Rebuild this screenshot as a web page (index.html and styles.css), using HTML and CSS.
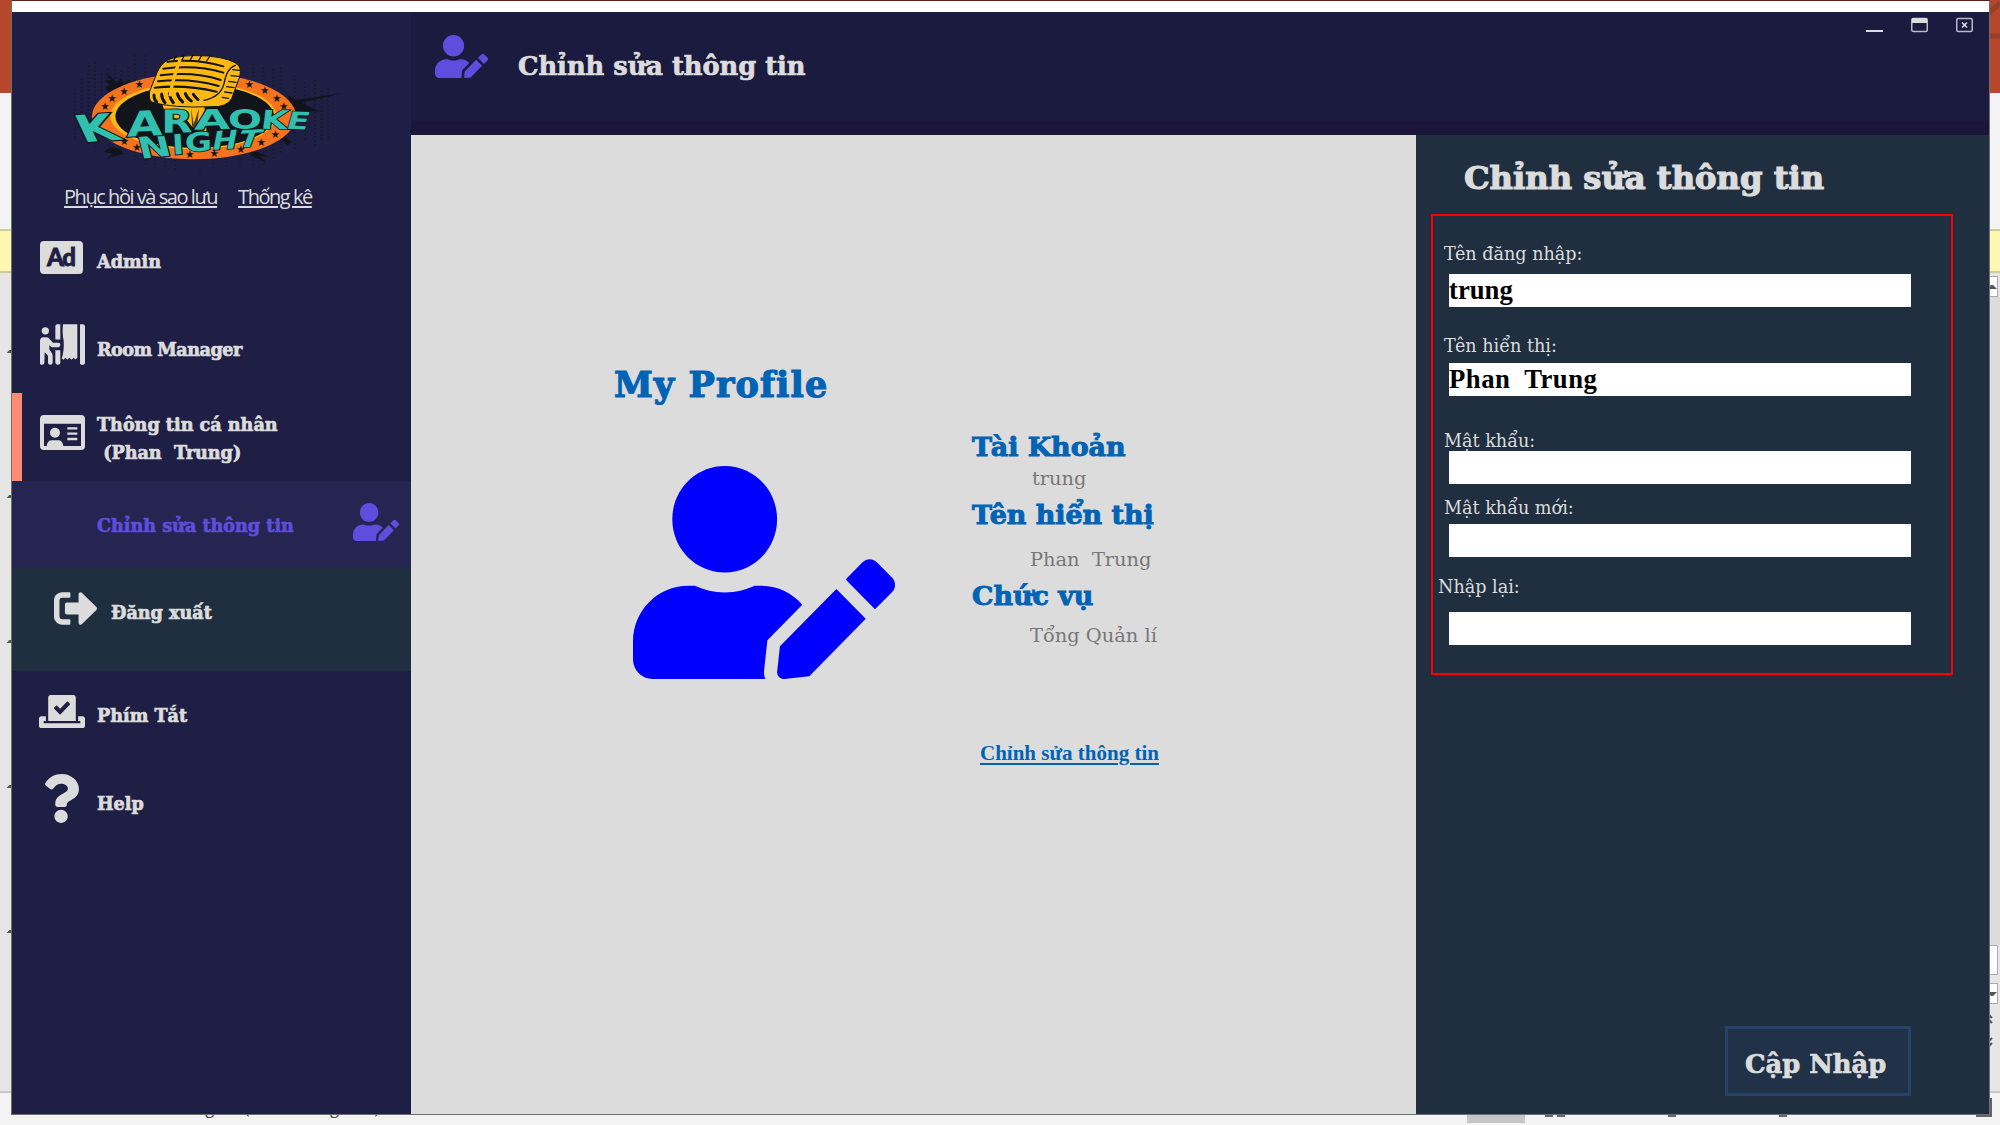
FILE: index.html
```html
<!DOCTYPE html>
<html lang="vi">
<head>
<meta charset="utf-8">
<title>Chỉnh sửa thông tin</title>
<link rel="stylesheet" href="styles.css">
</head>
<body>
<svg class="defs" width="0" height="0" aria-hidden="true">
  <symbol id="user-edit" viewBox="0 0 640 512" preserveAspectRatio="none"><path d="M224 256c70.7 0 128-57.3 128-128S294.7 0 224 0 96 57.3 96 128s57.3 128 128 128zm89.6 32h-16.7c-22.2 10.2-46.9 16-72.9 16s-50.6-5.8-72.9-16h-16.7C60.2 288 0 348.2 0 422.4V464c0 26.5 21.5 48 48 48h274.9c-2.4-6.8-3.4-14-2.6-21.3l6.8-60.9 1.2-11.1 7.9-7.9 77.3-77.3c-24.5-27.7-60-45.5-99.9-45.5zm45.3 145.3l-6.8 61c-1.1 10.2 7.5 18.8 17.6 17.6l60.9-6.8 137.9-137.9-71.7-71.7-137.9 137.8zM633 268.9L595.1 231c-9.3-9.3-24.5-9.3-33.8 0l-37.8 37.8-4.1 4.1 71.8 71.7 41.8-41.8c9.3-9.4 9.3-24.5 0-33.9z"/></symbol>
</svg>

<div class="backdrop">
  <div class="band ribbon"><svg class="ribbon-art" width="12" height="60" viewBox="0 0 12 60"><path d="M0 14 12 3M0 36H12" stroke="#95402c" stroke-width="5" fill="none"/></svg></div>
  <div class="band tools"></div>
  <div class="band notice"></div>
  <div class="band canvas">
    <div class="ticks"><i></i><i></i><i></i><i></i><i></i></div>
    <div class="scroll">
      <span class="sbtn up"></span>
      <span class="track"></span>
      <span class="sbtn thumb"></span>
      <span class="sbtn down"></span>
      <svg class="pager" width="12" height="36" viewBox="0 0 12 36"><path d="M2 5l4-4 4 4M2 10l4-4 4 4M2 25l4 4 4-4M2 30l4 4 4-4" fill="none" stroke="#555" stroke-width="2"/></svg>
    </div>
  </div>
  <div class="band status">
    <span class="lang">English (United Kingdom)</span>
    <span class="notes">Notes</span>
    <span class="comments">Comments</span>
    <span class="view on"></span><span class="view grid"></span><span class="view dot"></span><span class="view dot far"></span><span class="view fit"></span>
  </div>
</div>

<div class="window">
  <div class="titlebar"></div>
  <div class="shell">
    <aside class="sidebar">
      <svg class="logo" viewBox="150 140 900 390" width="300" height="130">
        <g stroke="#151722" stroke-width="5" stroke-dasharray="5 7" opacity=".65">
          <path d="M225 265V420M245 235V400M265 195V410M285 185V440M305 220V300M325 205V440M345 195V240M365 210V250M385 200V235M405 165V480M435 165V500M465 440V505M495 470V500M525 480V515M600 475V520M640 475V510M680 470V500M720 460V490M760 190V505M790 200V495M820 205V480M842 200V460M885 225V445M915 245V425M945 240V440M965 270V420M985 265V415"/>
        </g>
        <path fill="#12141b" d="M308 210l45 38 8-14 10 16 18-12 5 30-60 20-18-26 15-8-16-12 18-4zM865 285l22 14 148-22-130 30 52 26-60-2 10 36-40-60zM760 450l50 20-30-4 20 22-50-25zM330 440l30 5 10 15-50 15 20-15-30-5zM850 405l25 20-12 10-20-18z"/>
        <ellipse cx="582" cy="348" rx="306" ry="129" fill="#f4731f"/>
        <ellipse cx="580" cy="347" rx="249" ry="100" fill="#fdb913"/>
        <ellipse cx="584" cy="348" rx="238" ry="95" fill="#12141b"/>
        <g fill="#1b1712" font-family="DejaVu Sans" font-size="32" text-anchor="middle">
          <text x="315" y="329">★</text><text x="336" y="305">★</text><text x="372" y="283">★</text><text x="418" y="262">★</text>
          <text x="748" y="262">★</text><text x="794" y="282">★</text><text x="830" y="305">★</text><text x="851" y="329">★</text>
          <text x="373" y="434">★</text><text x="410" y="453">★</text><text x="569" y="474">★</text><text x="643" y="471">★</text><text x="722" y="459">★</text><text x="784" y="437">★</text><text x="826" y="414">★</text>
        </g>
        <g>
          <path fill="#fdb913" d="M487 312l125-8 8 95-35-10-25-30-62-10z"/>
          <path fill="#12141b" d="M573 322l8 50 16-48-6 58 22-52v70h-35z" opacity=".75"/>
          <path fill="#fdb913" stroke="#12141b" stroke-width="3" d="M505 178q35-16 120-11 75 8 92 30 8 15 0 38l-22 60q-15 26-60 24-120 5-180-14-10-8-6-32l22-56q12-28 34-39z"/>
          <g fill="none" stroke="#12141b" stroke-width="6" stroke-linecap="round">
            <path d="M502 184q90-10 168 14M490 205q100-12 180 12M482 225q100-12 180 14M474 243q100-10 182 14M464 262q90-10 186 12"/>
            <path d="M706 195q-26 8-34 55-10 40-60 50M718 210l-20-2M715 228l-22-2M708 246l-22-3M702 262l-22-3M696 278l-22-3M685 294l-18-3" stroke-width="4"/>
            <path d="M462 284q0 15 8 20M485 281q0 15 10 26M508 280q2 15 12 27M532 280q4 15 16 25M556 280q6 15 18 22M580 282q6 10 14 16" stroke-width="9"/>
            <path d="M520 182l8-14M546 180l6-14M570 180l8-14M596 181l8-14M620 182l8-12" stroke-width="4"/>
          </g>
          <path d="M540 178q-20 50-30 110" stroke="#fdb913" stroke-width="10" fill="none"/>
        </g>
        <g class="logo-word" font-size="100">
          <text transform="matrix(1.15 -.12 .22 .88 422 475)">N</text>
          <text transform="matrix(.95 -.08 .05 .83 518 463)">I</text>
          <text transform="matrix(1 -.05 0 .78 554 454)">G</text>
          <text transform="matrix(.9 -.06 -.15 .78 632 449)">H</text>
          <text transform="matrix(1 -.06 -.28 .72 706 442)">T</text>
          <text transform="matrix(1.52 -.1 .52 1.1 250 426)">K</text>
          <text transform="matrix(1.38 -.07 0 1.04 381 409)">A</text>
          <text transform="matrix(1.22 -.02 0 .95 484 397)">R</text>
          <text transform="matrix(1.4 -.04 0 .83 582 388)">A</text>
          <text transform="matrix(1.2 0 0 .82 684 387)">O</text>
          <text transform="matrix(1.05 .02 -.1 .78 780 385)">K</text>
          <text transform="matrix(.98 .04 -.2 .72 855 385)">E</text>
        </g>
      </svg>
      <div class="links"><a>Phục hồi và sao lưu</a><a>Thống kê</a></div>
      <nav>
        <div class="item">
          <span class="ico"><svg width="43" height="33" viewBox="0 0 43 33"><rect width="43" height="33" rx="4" fill="#dcdcdc"/><text x="7" y="24.500" class="ad" textLength="29">Ad</text></svg></span>
          <span class="label">Admin</span>
        </div>
        <div class="item">
          <span class="ico room"><svg width="45" height="41" viewBox="120 313 135 122"><g fill="#dcdcdc"><circle cx="136" cy="333" r="11"/><path d="M166 359V319q0-6 6-6h9v46zM166 391h15v38q0 6-7 6t-8-6zM189 313h43v101l-6 5-5-5-6 6-7-6-6 6-6-6-5 6-6-4q8-22 6-54-5-20-2-49zM240 313h8q7 0 7 7v108q0 7-8 7t-7-7z"/><path d="M120 363q0-10 10-11h9q7 0 11 7l9 10h17q5 0 5 6t-5 7h-21l-7-6v13l8 11q2 4 2 9v20q0 6-7 6t-7-6v-21l-10-11-1 32q0 6-7 6t-6-6z"/></g></svg></span>
          <span class="label tight">Room Manager</span>
        </div>
        <div class="item active">
          <span class="ico id"><svg width="45" height="35" viewBox="0 0 135 105"><path fill="#dcdcdc" fill-rule="evenodd" d="M12 0h111q12 0 12 12v81q0 12-12 12H12Q0 105 0 93V12Q0 0 12 0zM12 26v67h8q2-17 16-17h18q14 0 16 17h53V26z"/><circle cx="45" cy="53" r="15" fill="#dcdcdc"/><path d="M82 40h30M82 56h30M82 72h30" stroke="#dcdcdc" stroke-width="7"/></svg></span>
          <span class="label two">Thông tin cá nhân<br> (Phan  Trung)</span>
        </div>
        <div class="item current">
          <span class="ico"></span>
          <span class="label">Chỉnh sửa thông tin</span>
          <svg class="edit" width="46" height="38"><use href="#user-edit"/></svg>
        </div>
        <div class="item logout">
          <span class="ico out"><svg width="43" height="33" viewBox="0 60 504 392" preserveAspectRatio="none"><path fill="#dcdcdc" d="M497 273L329 441c-15 15-41 4.500-41-17v-96H152c-13.300 0-24-10.700-24-24v-96c0-13.300 10.700-24 24-24h136V88c0-21.400 25.900-32 41-17l168 168c9.300 9.400 9.300 24.600 0 34zM192 436v-40c0-6.600-5.400-12-12-12H96c-17.700 0-32-14.300-32-32V160c0-17.700 14.300-32 32-32h84c6.600 0 12-5.400 12-12V76c0-6.600-5.400-12-12-12H96c-53 0-96 43-96 96v192c0 53 43 96 96 96h84c6.600 0 12-5.400 12-12z"/></svg></span>
          <span class="label">Đăng xuất</span>
        </div>
        <div class="item">
          <span class="ico vote"><svg width="46" height="33" viewBox="0 32 640 448" preserveAspectRatio="none"><path fill="#dcdcdc" d="M608 320h-64v64h22.400c5.300 0 9.600 3.600 9.600 8v16c0 4.400-4.300 8-9.600 8H73.600c-5.300 0-9.600-3.600-9.600-8v-16c0-4.400 4.300-8 9.600-8H96v-64H32c-17.700 0-32 14.300-32 32v96c0 17.700 14.300 32 32 32h576c17.700 0 32-14.300 32-32v-96c0-17.700-14.300-32-32-32zm-96 64V64.300c0-17.900-14.500-32.300-32.300-32.300H160.400C142.500 32 128 46.500 128 64.300V384h384zM211.200 202l25.500-25.300c4.200-4.200 11-4.200 15.200.1l41.300 41.600 95.200-94.400c4.200-4.200 11-4.200 15.200.1l25.300 25.500c4.200 4.200 4.200 11-.1 15.200L300.500 292c-4.200 4.200-11 4.200-15.200-.1l-74.100-74.700c-4.300-4.200-4.200-11 0-15.200z"/></svg></span>
          <span class="label">Phím Tắt</span>
        </div>
        <div class="item">
          <span class="ico help"><svg width="34" height="49" viewBox="25 0 353 512" preserveAspectRatio="none"><path fill="#dcdcdc" d="M202.021 0C122.202 0 70.503 32.703 29.914 91.026c-7.363 10.580-5.093 25.086 5.178 32.874l43.138 32.709c10.373 7.865 25.132 6.026 33.253-4.148 25.049-31.381 43.630-49.449 82.757-49.449 30.764 0 68.816 19.799 68.816 49.631 0 22.552-18.617 34.134-48.993 51.164-35.423 19.860-82.299 44.576-82.299 106.405V320c0 13.255 10.745 24 24 24h72.471c13.255 0 24-10.745 24-24v-5.773c0-42.860 125.268-44.645 125.268-160.627C377.504 66.256 286.902 0 202.021 0zM192 373.459c-38.196 0-69.271 31.075-69.271 69.271 0 38.195 31.075 69.270 69.271 69.270s69.271-31.075 69.271-69.271-31.075-69.270-69.271-69.270z"/></svg></span>
          <span class="label">Help</span>
        </div>
      </nav>
    </aside>

    <div class="main">
      <header class="header">
        <svg class="head-icon" width="53" height="43"><use href="#user-edit"/></svg>
        <h1>Chỉnh sửa thông tin</h1>
        <div class="controls">
          <svg width="17" height="16" viewBox="0 0 17 16"><path d="M0 14h17" stroke="#dcdcdc" stroke-width="2"/></svg>
          <svg width="17" height="16" viewBox="0 0 17 16"><rect x=".75" y="1.500" width="15.500" height="13" rx="1.500" fill="none" stroke="#b9b9c6" stroke-width="1.500"/><path d="M1 1h15v5H1z" fill="#dcdcdc"/></svg>
          <svg width="17" height="16" viewBox="0 0 17 16"><rect x=".75" y="1.500" width="15.500" height="13" rx="1.500" fill="none" stroke="#b9b9c6" stroke-width="1.500"/><path d="M6 5.500l5 5M11 5.500l-5 5" stroke="#dcdcdc" stroke-width="1.600"/></svg>
        </div>
      </header>
      <div class="body">
        <section class="profile">
          <div class="portrait">
            <h2>My Profile</h2>
            <svg width="262" height="213"><use href="#user-edit"/></svg>
          </div>
          <div class="facts">
            <h3>Tài Khoản</h3><p class="v1">trung</p>
            <h3 class="t2">Tên hiển thị</h3><p class="v2">Phan  Trung</p>
            <h3 class="t3">Chức vụ</h3><p class="v3">Tổng Quản lí</p>
            <a>Chỉnh sửa thông tin</a>
          </div>
        </section>
        <section class="editor">
          <h2>Chỉnh sửa thông tin</h2>
          <form class="fields">
            <label class="l1">Tên đăng nhập:</label><div class="input i1">trung</div>
            <label class="l2">Tên hiển thị:</label><div class="input i2 name">Phan  Trung</div>
            <label class="l3">Mật khẩu:</label><div class="input i3"></div>
            <label class="l4">Mật khẩu mới:</label><div class="input i4"></div>
            <label class="l5">Nhập lại:</label><div class="input i5"></div>
          </form>
          <div class="update">Cập Nhập</div>
        </section>
      </div>
    </div>
  </div>
</div>
</body>
</html>
```
FILE: styles.css
```css
* { box-sizing: border-box; margin: 0; padding: 0; }
body { width: 2000px; height: 1125px; overflow: hidden; position: relative; font-family: "DejaVu Serif", "Liberation Serif", serif; color: #dcdcdc; }
.defs { position: absolute; }
h1, h2, h3, .label, .update { font-weight: bold; white-space: pre; -webkit-text-stroke: .7px currentColor; }

/* application visible around the window */
.backdrop { height: 1125px; display: flex; flex-direction: column; background: #f3f3f3; }
.ribbon { height: 93px; background: #b7472a; display: flex; justify-content: flex-end; }
.tools { height: 136px; background: #f3f3f3; }
.notice { height: 44px; background: #fdf7b2; border: solid #cfcb9b; border-width: 2px 0; }
.canvas { height: 820px; background: #e6e6e6; display: flex; justify-content: space-between; border-bottom: 2px solid #c8c8c8; }
.ticks { width: 12px; padding: 77px 0 0 8px; display: flex; flex-direction: column; gap: 142px; }
.ticks i { width: 5px; height: 3px; background: #555; transform: skewX(-40deg); flex: none; }
.scroll { width: 16px; display: flex; flex-direction: column; padding-top: 3px; }
.sbtn { width: 14px; height: 21px; background: #fff; border: 1px solid #ababab; }
.up::after, .down::after { content: ""; display: block; margin: 8px 0 0 2px; border: solid transparent; border-width: 0 4px 4px; border-bottom-color: #555; }
.down::after { transform: scaleY(-1); }
.track { height: 648px; background: #dcdcdc; }
.thumb { height: 30px; }
.down { margin-top: 8px; }
.pager { margin: 9px 0 0 -2px; }
.status { height: 32px; display: flex; align-items: flex-start; font: 16.500px/20px "Open Sans", sans-serif; color: #444; padding: 5px 0 0 186px; }
.lang { width: 1076px; }
.notes { width: 100px; }
.comments { width: 105px; }
.view { width: 20px; height: 19px; background: #666; flex: none; }
.view.on { width: 58px; height: 25px; background: #c6c6c6; }
.view.grid { margin-left: 20px; border: solid #666; border-width: 0 8px; background: #f3f3f3; }
.view.dot { width: 8px; margin-left: 103px; }
.view.fit { width: 16px; margin-left: 189px; }

.window { position: absolute; left: 11px; top: 0; width: 1979px; height: 1115px; border: 1px solid #6e6e6e; border-top-color: #5c1f15; display: flex; flex-direction: column; background: #1f1e44; }
.titlebar { height: 11px; background: #fff; }
.shell { flex: 1; display: flex; min-height: 0; }

.sidebar { width: 399px; background: #1f1e44; }
.logo { display: block; margin: 35px 0 0 38px; }
.logo-word { font-family: "DejaVu Sans", sans-serif; font-weight: bold; fill: #31bfae; stroke: #12141b; stroke-width: 6px; paint-order: stroke; }
.links { display: flex; height: 40px; padding: 7px 0 0 52px; font: 20px/26px "Open Sans", sans-serif; gap: 21px; }
.links a { text-decoration: underline; text-underline-offset: 2px; letter-spacing: -1.450px; white-space: nowrap; }
.item { height: 88px; display: flex; }
.item:nth-child(2), .item:nth-child(4) { height: 87.500px; }
.ico { width: 85px; flex: none; padding: 24px 0 0 28px; }
.room { padding-top: 19px; }
.id { padding-top: 22px; }
.vote { padding: 24px 0 0 27px; }
.help { padding: 15px 0 0 33px; }
.out { width: 99px; padding: 24px 0 0 42px; }
.ad { font: bold 24px "Lato", sans-serif; font-weight: 900; fill: #1f1e44; stroke: #1f1e44; stroke-width: .8px; }
.label { font-size: 17.600px; line-height: 28px; padding-top: 31px; }
.tight { letter-spacing: -.5px; }
.label.two { padding-top: 18px; }
.active { box-shadow: inset 10px 0 #ff8c72; }
.current { background: #262450; color: #5f4ddd; }
.edit { margin: 22px 12px 0 auto; fill: #5f4ddd; }
.logout { height: 103px; background: #202f40; }

.main { flex: 1; display: flex; flex-direction: column; }
.header { height: 123px; background: linear-gradient(#1b1a3f 108px, #1a1539 110px); display: flex; flex: none; }
.head-icon { margin: 23px 30px 0 24px; fill: #5f4ddd; flex: none; }
.header h1 { font-size: 25.700px; line-height: 32px; margin-top: 38px; }
.controls { display: flex; gap: 28px; margin: 5px 16px 0 auto; }
.body { flex: 1; display: flex; }
.profile { width: 1005px; background: #dcdcdc; display: flex; padding-left: 203px; color: #0063b5; }
.portrait { width: 358px; padding-top: 230px; }
.portrait h2 { font-size: 35px; line-height: 40px; letter-spacing: 1.100px; -webkit-text-stroke-width: 1.200px; }
.portrait svg { display: block; margin: 61px 0 0 19px; fill: #00f; }
.facts { padding-top: 296px; display: flex; flex-direction: column; }
.facts h3 { font-size: 26.900px; line-height: 32px; -webkit-text-stroke-width: 1px; }
.facts p { font-size: 19.400px; line-height: 24px; color: #777; padding-left: 58px; white-space: pre; }
.facts .v1 { margin-top: 4px; padding-left: 60px; }
.facts .t2 { margin-top: 8px; }
.facts .v2 { margin-top: 17px; }
.facts .t3 { margin-top: 8px; }
.facts .v3 { margin-top: 12px; }
.facts a { margin: 93px 0 0 8px; font: bold 21px/24px "Liberation Serif", serif; text-decoration: underline; text-underline-offset: 3px; }

.editor { flex: 1; background: #202f40; padding-left: 15px; display: flex; flex-direction: column; }
.editor h2 { font-size: 32.200px; line-height: 40px; margin: 23px 0 0 33px; -webkit-text-stroke-width: 1.200px; }
.fields { width: 522px; height: 461px; border: 2px solid #f00; margin-top: 16px; padding-top: 26px; }
.fields label { display: block; font-size: 17.600px; line-height: 24px; margin-left: 11px; }
.input { width: 462px; height: 33px; margin-left: 16px; background: #fff; color: #000; font: bold 26.700px/33px "Liberation Serif", serif; white-space: pre; }
.name { letter-spacing: .5px; }
.i1 { margin-top: 8px; }
.fields .l2 { margin-top: 27px; }
.i2 { margin-top: 5px; }
.fields .l3 { margin-top: 33px; }
.i3 { margin-top: -2px; }
.fields .l4 { margin-top: 12px; }
.i4 { margin-top: 4px; }
.fields .l5 { margin: 18px 0 0 5px; }
.i5 { margin-top: 13px; }
.update { width: 186px; height: 70px; margin: auto 0 18px 294px; border: 3px solid #244369; background: #213147; font-size: 25.800px; line-height: 70px; text-indent: 17px; }
```
